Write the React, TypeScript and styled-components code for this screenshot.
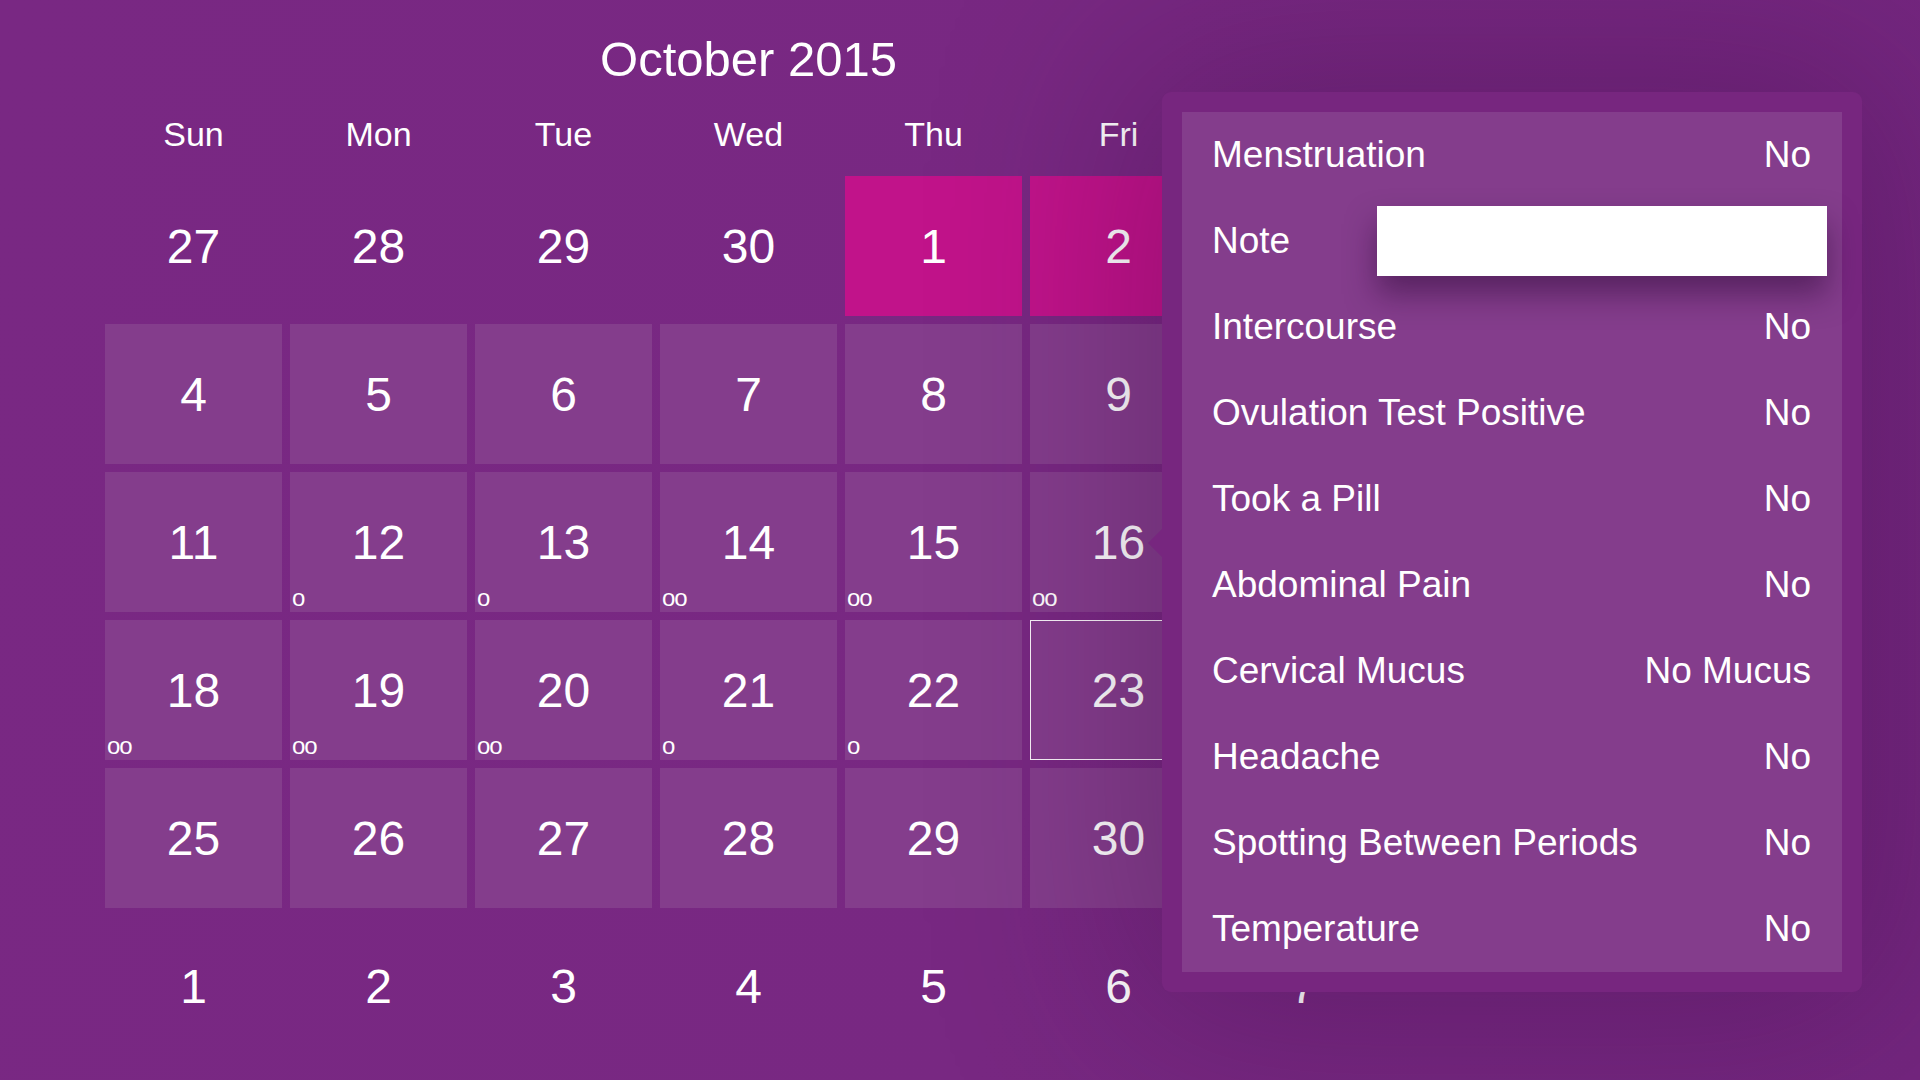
import React from "react";
import styled, { createGlobalStyle, css } from "styled-components";

const GlobalStyle = createGlobalStyle`
  html, body {
    margin: 0;
    padding: 0;
    background: #782882;
  }
  body {
    font-family: "Liberation Sans", Arial, sans-serif;
    color: #fff;
  }
`;

const Screen = styled.div`
  position: relative;
  width: 1920px;
  height: 1080px;
  overflow: hidden;
  background: linear-gradient(100deg, #792883 0%, #782882 55%, #74267f 100%);
`;

const Calendar = styled.section`
  width: 1287px;
  margin-left: 105px;
`;

const MonthTitle = styled.h1`
  margin: 0;
  padding-top: 22px;
  height: 74px;
  line-height: 74px;
  font-size: 49px;
  font-weight: 400;
  text-align: center;
`;

const WeekdayRow = styled.div`
  display: grid;
  grid-template-columns: repeat(7, 177px);
  column-gap: 8px;
  height: 76px;
  line-height: 76px;
  margin-bottom: 4px;
`;

const Weekday = styled.div`
  font-size: 34px;
  text-align: center;
`;

const DayGrid = styled.div`
  display: grid;
  grid-template-columns: repeat(7, 177px);
  grid-auto-rows: 140px;
  gap: 8px;
`;

type DayKind = "out" | "in" | "period";

const DayCell = styled.div<{ $kind: DayKind; $selected?: boolean }>`
  position: relative;
  display: flex;
  align-items: center;
  justify-content: center;
  box-sizing: border-box;
  font-size: 48px;
  background: ${(p) =>
    p.$kind === "period" ? "#c1138a" : p.$kind === "in" ? "#843d8c" : "transparent"};
  ${(p) =>
    p.$selected &&
    css`
      border: 1px solid rgba(255, 255, 255, 0.95);
    `}
`;

const Marks = styled.span`
  position: absolute;
  left: 2px;
  bottom: 2px;
  font-size: 24px;
  line-height: 24px;
  letter-spacing: -1px;
`;

const Popover = styled.aside`
  position: absolute;
  left: 1162px;
  top: 92px;
  width: 700px;
  height: 900px;
  box-sizing: border-box;
  padding: 20px;
  border-radius: 9px;
  background: #77267f;
  box-shadow: 0 0 200px 30px rgba(40, 0, 45, 0.26);

  &::before {
    content: "";
    position: absolute;
    left: -14px;
    top: 437px;
    border-top: 14px solid transparent;
    border-bottom: 14px solid transparent;
    border-right: 14px solid #77267f;
  }
`;

const OptionList = styled.div`
  display: flex;
  flex-direction: column;
  height: 100%;
  background: #843d8c;
`;

const OptionRow = styled.div<{ $tight?: boolean }>`
  display: flex;
  align-items: center;
  justify-content: space-between;
  height: 86px;
  padding: 0 ${(p) => (p.$tight ? "15px" : "31px")} 0 30px;
  font-size: 37px;
`;

const NoteField = styled.div`
  width: 450px;
  height: 70px;
  background: #fff;
  box-shadow: 0 18px 30px rgba(45, 10, 55, 0.5);
`;

type Day = { n?: number; kind: DayKind; marks?: string; selected?: boolean };

// Saturday lies under the popover; only its last "7" peeks out below
const weekdays = ["Sun", "Mon", "Tue", "Wed", "Thu", "Fri", ""];

const marks: Record<number, string> = {
  12: "o",
  13: "o",
  14: "oo",
  15: "oo",
  16: "oo",
  18: "oo",
  19: "oo",
  20: "oo",
  21: "o",
  22: "o",
};

const days: Day[] = [
  ...[27, 28, 29, 30].map((n) => ({ n, kind: "out" as DayKind })),
  { n: 1, kind: "period" },
  { n: 2, kind: "period" },
  { kind: "period" },
  ...Array.from({ length: 28 }, (_, i) => {
    const n = i + 4;
    const covered = i % 7 === 6;
    return {
      n: covered ? undefined : n,
      kind: "in" as DayKind,
      marks: marks[n],
      selected: n === 23,
    };
  }),
  ...[1, 2, 3, 4, 5, 6, 7].map((n) => ({ n, kind: "out" as DayKind })),
];

const options: [string, string][] = [
  ["Menstruation", "No"],
  ["Note", ""],
  ["Intercourse", "No"],
  ["Ovulation Test Positive", "No"],
  ["Took a Pill", "No"],
  ["Abdominal Pain", "No"],
  ["Cervical Mucus", "No Mucus"],
  ["Headache", "No"],
  ["Spotting Between Periods", "No"],
  ["Temperature", "No"],
];

const App: React.FC = () => {
  return (
    <Screen>
      <GlobalStyle />
      <Calendar>
        <MonthTitle>October 2015</MonthTitle>
        <WeekdayRow>
          {weekdays.map((d, i) => (
            <Weekday key={i}>{d}</Weekday>
          ))}
        </WeekdayRow>
        <DayGrid>
          {days.map((d, i) => (
            <DayCell key={i} $kind={d.kind} $selected={d.selected}>
              {d.n}
              {d.marks && <Marks>{d.marks}</Marks>}
            </DayCell>
          ))}
        </DayGrid>
      </Calendar>
      <Popover>
        <OptionList>
          {options.map(([label, value]) =>
            label === "Note" ? (
              <OptionRow key={label} $tight>
                <span>{label}</span>
                <NoteField />
              </OptionRow>
            ) : (
              <OptionRow key={label}>
                <span>{label}</span>
                <span>{value}</span>
              </OptionRow>
            )
          )}
        </OptionList>
      </Popover>
    </Screen>
  );
};

export default App;
